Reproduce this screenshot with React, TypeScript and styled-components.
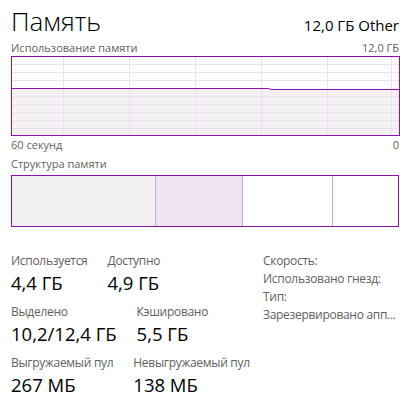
import React from 'react';
import styled, { createGlobalStyle } from 'styled-components';

const GlobalStyle = createGlobalStyle`
  html, body {
    margin: 0;
    padding: 0;
    background: #ffffff;
  }
  body {
    font-family: 'Open Sans', 'Noto Sans', sans-serif;
    color: #000;
  }
`;

const purple = '#8b12ae';

const Page = styled.div`
  width: 408px;
  height: 418px;
  box-sizing: border-box;
  padding: 3px 9px 0 11px;
  overflow: hidden;
`;

const Header = styled.div`
  display: flex;
  justify-content: space-between;
  align-items: baseline;
  height: 37px;
`;

const Title = styled.div`
  font-size: 26px;
  font-weight: 300;
  line-height: 36px;
`;

const Subtitle = styled.div`
  font-size: 15px;
  line-height: 20px;
`;

const Caption = styled.div<{ $gap?: number }>`
  display: flex;
  justify-content: space-between;
  font-size: 11px;
  line-height: 16px;
  color: #5f5f5f;
  margin-top: ${(p) => p.$gap ?? 0}px;
`;

const GraphSvg = styled.svg`
  display: block;
  width: 389px;
  height: 80px;
`;

const StructureBar = styled.div`
  display: flex;
  height: 52px;
  box-sizing: border-box;
  border: 1px solid ${purple};
  margin-top: 3px;
`;

const Segment = styled.div<{ $fill: string; $divider?: boolean }>`
  background: ${(p) => p.$fill};
  border-right: ${(p) => (p.$divider ? '1px solid #caa3d9' : 'none')};
`;

const Stats = styled.div`
  display: flex;
  margin-top: 25px;
`;

const StatsLeft = styled.div`
  width: 252px;
  display: flex;
  flex-direction: column;
  gap: 6px;
`;

const StatRow = styled.div`
  display: flex;
  gap: 20px;
`;

const Stat = styled.div`
  display: flex;
  flex-direction: column;
`;

const StatLabel = styled.div`
  font-size: 12px;
  line-height: 17px;
  letter-spacing: -0.3px;
  color: #5f5f5f;
  white-space: nowrap;
`;

const StatValue = styled.div`
  font-size: 18.5px;
  line-height: 28px;
  white-space: nowrap;
`;

const InfoList = styled.div`
  flex: 1;
  min-width: 0;
  display: flex;
  flex-direction: column;
`;

const InfoItem = styled.div`
  font-size: 12px;
  line-height: 18px;
  letter-spacing: -0.3px;
  color: #5f5f5f;
  white-space: nowrap;
`;

const verticals = [52, 118, 184, 250, 316, 380];
const horizontals = [8, 16, 24, 40, 48, 56, 64, 72];

const UsageGraph: React.FC = () => (
  <GraphSvg viewBox="0 0 389 80">
    <path d="M1 33 H257 L260 34 H388 V79 H1 Z" fill="#f3f1f4" />
    {horizontals.map((y) => (
      <line key={'h' + y} x1={1} x2={388} y1={y + 0.5} y2={y + 0.5} stroke="#ecdff0" />
    ))}
    {verticals.map((x) => (
      <line key={'v' + x} x1={x + 0.5} x2={x + 0.5} y1={1} y2={79} stroke="#ecdff0" />
    ))}
    <polyline points="1,32.5 257,32.5 261,33.5 388,33.5" fill="none" stroke={purple} strokeWidth={1} />
    <rect x={0.5} y={0.5} width={388} height={79} fill="none" stroke={purple} />
  </GraphSvg>
);

const App: React.FC = () => {
  return (
    <Page>
      <GlobalStyle />
      <Header>
        <Title>Память</Title>
        <Subtitle>12,0 ГБ Other</Subtitle>
      </Header>
      <Caption>
        <span>Использование памяти</span>
        <span>12,0 ГБ</span>
      </Caption>
      <UsageGraph />
      <Caption $gap={1}>
        <span>60 секунд</span>
        <span>0</span>
      </Caption>
      <Caption $gap={3}>
        <span>Структура памяти</span>
      </Caption>
      <StructureBar>
        <Segment $fill="#f3f0f4" $divider style={{ width: 143 }} />
        <Segment $fill="#ede3f1" $divider style={{ width: 86 }} />
        <Segment $fill="#ffffff" $divider style={{ width: 89 }} />
        <Segment $fill="#ffffff" style={{ flex: 1 }} />
      </StructureBar>
      <Stats>
        <StatsLeft>
          <StatRow>
            <Stat>
              <StatLabel>Используется</StatLabel>
              <StatValue>4,4 ГБ</StatValue>
            </Stat>
            <Stat>
              <StatLabel>Доступно</StatLabel>
              <StatValue>4,9 ГБ</StatValue>
            </Stat>
          </StatRow>
          <StatRow>
            <Stat>
              <StatLabel>Выделено</StatLabel>
              <StatValue>10,2/12,4 ГБ</StatValue>
            </Stat>
            <Stat>
              <StatLabel>Кэшировано</StatLabel>
              <StatValue>5,5 ГБ</StatValue>
            </Stat>
          </StatRow>
          <StatRow>
            <Stat>
              <StatLabel>Выгружаемый пул</StatLabel>
              <StatValue>267 МБ</StatValue>
            </Stat>
            <Stat>
              <StatLabel>Невыгружаемый пул</StatLabel>
              <StatValue>138 МБ</StatValue>
            </Stat>
          </StatRow>
        </StatsLeft>
        <InfoList>
          <InfoItem>Скорость:</InfoItem>
          <InfoItem>Использовано гнезд:</InfoItem>
          <InfoItem>Тип:</InfoItem>
          <InfoItem>Зарезервировано апп...</InfoItem>
        </InfoList>
      </Stats>
    </Page>
  );
};

export default App;
